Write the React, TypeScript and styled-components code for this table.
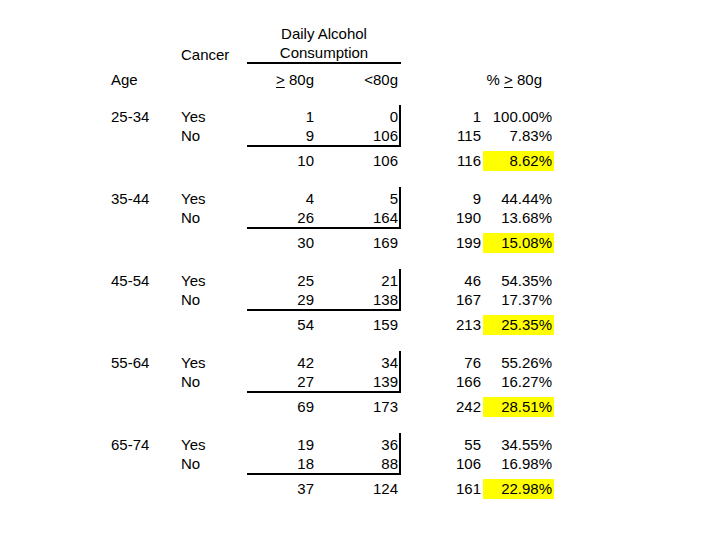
import React from 'react';
import styled, { createGlobalStyle } from 'styled-components';

const GlobalStyle = createGlobalStyle`
  html, body {
    margin: 0;
    padding: 0;
    background: #ffffff;
  }
  body {
    font-family: "Liberation Sans", Arial, sans-serif;
    font-size: 15px;
    color: #000000;
  }
`;

// shared column widths: age | cancer | >=80g | <80g | total | percent
const COLUMNS = '70px 66px 69px 85px 82px 71px';

const Page = styled.div`
  width: 720px;
  height: 540px;
  box-sizing: border-box;
  padding: 24px 0 0 111px;
`;

const Row = styled.div<{ $height?: number }>`
  display: grid;
  grid-template-columns: ${COLUMNS};
  line-height: ${props => props.$height || 19}px;
`;

const TopRow = styled(Row)`
  & > * {
    padding-top: 2px;
  }
`;

const HeaderTop = styled(Row)`
  align-items: end;
`;

const HeaderBottom = styled(Row)`
  margin-top: 6px;
`;

const Label = styled.div`
  text-align: left;
  white-space: nowrap;
`;

const Title = styled.div`
  grid-column: span 2;
  text-align: center;
  border-bottom: 2px solid #000;
`;

const Num = styled.div<{ $pad: number }>`
  text-align: right;
  padding-right: ${props => props.$pad}px;
  white-space: nowrap;
`;

const Count = styled(Num)<{ $bar?: boolean; $rule?: boolean }>`
  border-right: ${props => (props.$bar ? '2px solid #000' : 'none')};
  border-bottom: ${props => (props.$rule ? '2px solid #000' : 'none')};
  padding-right: ${props => (props.$bar ? props.$pad - 2 : props.$pad)}px;
`;

const Pct = styled(Num)<{ $hi?: boolean }>`
  background: ${props => (props.$hi ? '#ffff00' : 'transparent')};
`;

const PctHeader = styled(Num)`
  grid-column: span 2;
`;

const Ge = styled.span`
  text-decoration: underline;
  text-underline-offset: 2px;
`;

const Groups = styled.div`
  margin-top: 16px;
  display: flex;
  flex-direction: column;
  gap: 16px;
`;

const Group = styled.div`
  display: flex;
  flex-direction: column;
  gap: 4px;
`;

type Line = [number, number, number, string];

interface AgeGroup {
  age: string;
  yes: Line;
  no: Line;
  total: Line;
}

const groups: AgeGroup[] = [
  { age: '25-34', yes: [1, 0, 1, '100.00%'], no: [9, 106, 115, '7.83%'], total: [10, 106, 116, '8.62%'] },
  { age: '35-44', yes: [4, 5, 9, '44.44%'], no: [26, 164, 190, '13.68%'], total: [30, 169, 199, '15.08%'] },
  { age: '45-54', yes: [25, 21, 46, '54.35%'], no: [29, 138, 167, '17.37%'], total: [54, 159, 213, '25.35%'] },
  { age: '55-64', yes: [42, 34, 76, '55.26%'], no: [27, 139, 166, '16.27%'], total: [69, 173, 242, '28.51%'] },
  { age: '65-74', yes: [19, 36, 55, '34.55%'], no: [18, 88, 106, '16.98%'], total: [37, 124, 161, '22.98%'] },
];

const AgeBlock: React.FC<{ group: AgeGroup }> = ({ group }) => (
  <Group>
    <div>
      <TopRow>
        <Label>{group.age}</Label>
        <Label>Yes</Label>
        <Count $pad={2}>{group.yes[0]}</Count>
        <Count $pad={3} $bar>{group.yes[1]}</Count>
        <Num $pad={2}>{group.yes[2]}</Num>
        <Pct $pad={2}>{group.yes[3]}</Pct>
      </TopRow>
      <Row>
        <Label />
        <Label>No</Label>
        <Count $pad={2} $rule>{group.no[0]}</Count>
        <Count $pad={3} $bar $rule>{group.no[1]}</Count>
        <Num $pad={2}>{group.no[2]}</Num>
        <Pct $pad={2}>{group.no[3]}</Pct>
      </Row>
    </div>
    <Row $height={20}>
      <Label />
      <Label />
      <Count $pad={2}>{group.total[0]}</Count>
      <Count $pad={3}>{group.total[1]}</Count>
      <Num $pad={2}>{group.total[2]}</Num>
      <Pct $pad={2} $hi>{group.total[3]}</Pct>
    </Row>
  </Group>
);

const App: React.FC = () => (
  <>
    <GlobalStyle />
    <Page>
      <HeaderTop>
        <Label />
        <Label>Cancer</Label>
        <Title>
          Daily Alcohol
          <br />
          Consumption
        </Title>
      </HeaderTop>
      <HeaderBottom>
        <Label>Age</Label>
        <Label />
        <Num $pad={2}>
          <Ge>&gt;</Ge> 80g
        </Num>
        <Num $pad={3}>&lt;80g</Num>
        <PctHeader $pad={12}>
          % <Ge>&gt;</Ge> 80g
        </PctHeader>
      </HeaderBottom>
      <Groups>
        {groups.map(g => (
          <AgeBlock key={g.age} group={g} />
        ))}
      </Groups>
    </Page>
  </>
);

export default App;
